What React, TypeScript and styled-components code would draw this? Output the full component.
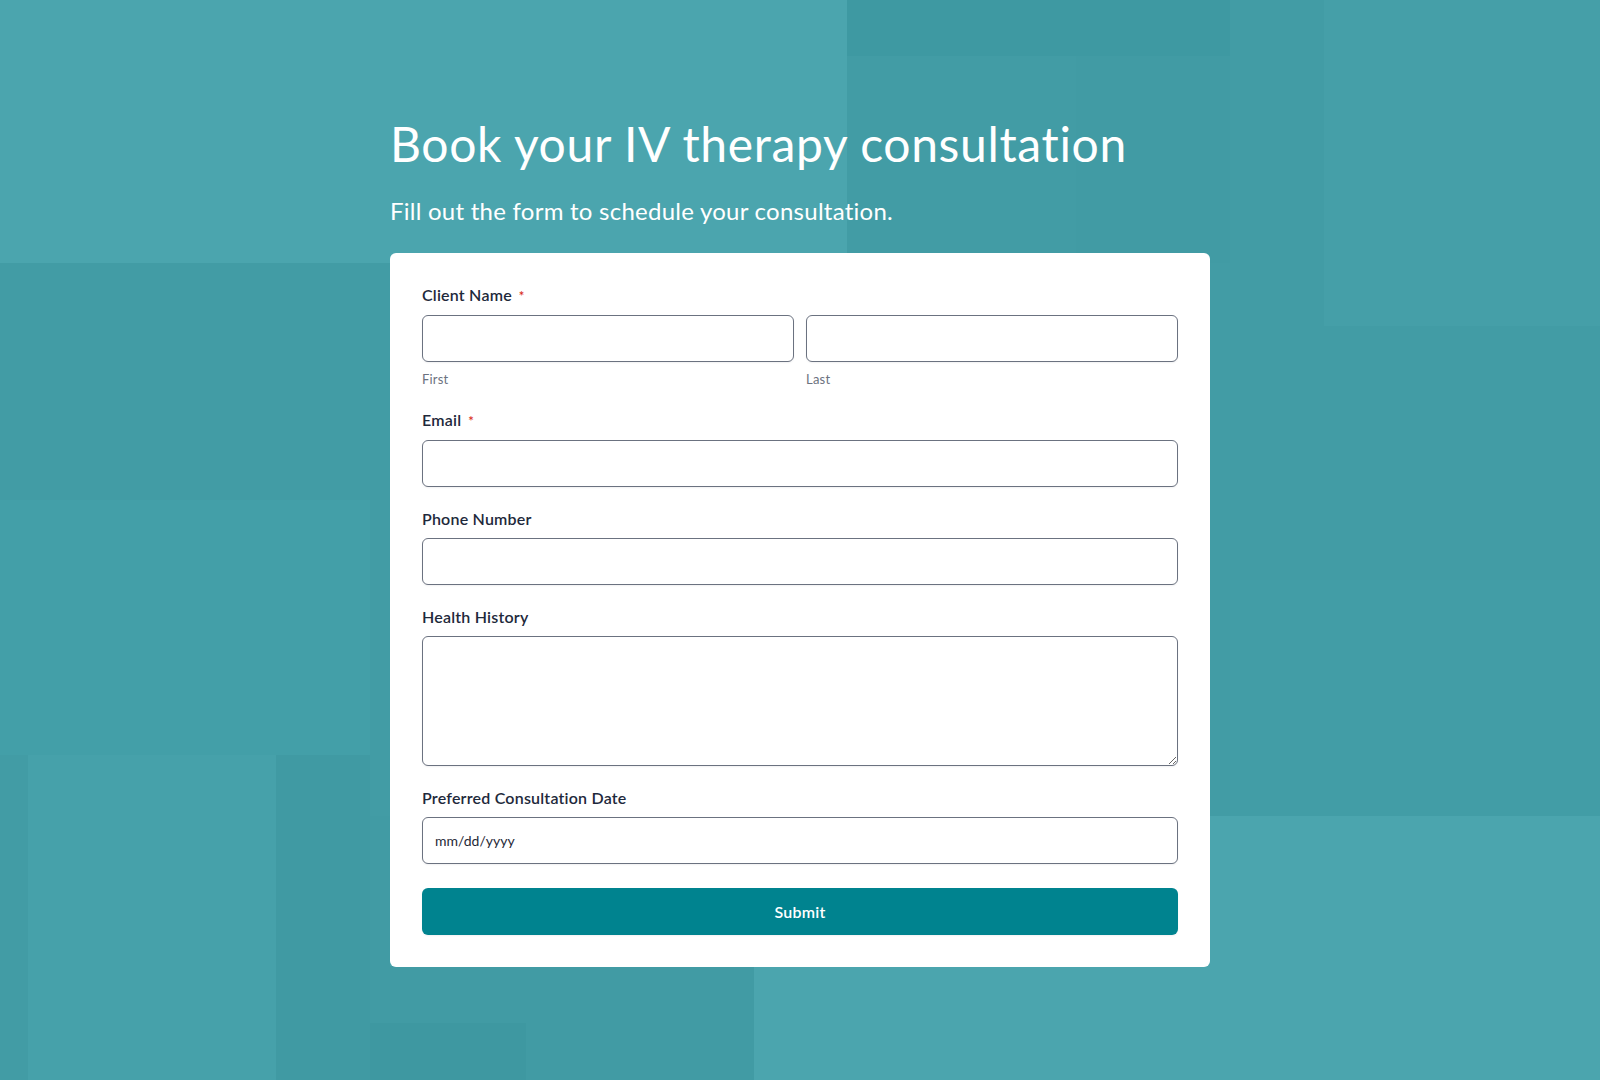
import styled, { createGlobalStyle } from 'styled-components'

const GlobalStyle = createGlobalStyle`
    * {
        box-sizing: border-box;
    }
    body {
        margin: 0;
        font-family: Lato, "Noto Sans", sans-serif;
        font-variant-ligatures: none;
        letter-spacing: 0.013em;
    }
`

// soft tiles painted on the page background: [colour, x, y, width, height]
const tiles: [string, number, number, number, number][] = [
    ['#3e98a1', 370, 1023, 156, 57],
    ['#419ba4', 370, 966, 384, 114],
    ['#409aa3', 276, 755, 94, 325],
    ['#46a1aa', 28, 755, 248, 325],
    ['#429ca5', 0, 755, 28, 325],
    ['#439fa8', 0, 500, 370, 255],
    ['#4ba5ae', 1211, 816, 389, 264],
    ['#429da6', 1230, 580, 370, 236],
    ['#3e99a2', 847, 0, 383, 56],
    ['#419ba4', 1076, 56, 154, 207],
    ['#459fa8', 1324, 0, 276, 326],
    ['#429ca5', 0, 263, 1600, 553],
    ['#429ca5', 847, 0, 753, 263],
    ['#419ba4', 0, 816, 390, 150],
]

const tileLayers = tiles
    .map(([c, x, y, w, h]) => `linear-gradient(${c}, ${c}) ${x}px ${y}px / ${w}px ${h}px no-repeat`)
    .join(', ')

const Page = styled.main`
    min-height: 100vh;
    padding: 115px 0 60px;
    background: ${tileLayers}, #4ba5ae;
`

const Wrap = styled.div`
    width: 820px;
    margin: 0 auto;
`

const Title = styled.h1`
    margin: 0 0 24px;
    font-size: 48px;
    font-weight: 400;
    line-height: 1.2;
    letter-spacing: 0.66px;
    color: #ffffff;
`

const Subtitle = styled.p`
    margin: 0 0 28px;
    font-size: 24px;
    font-weight: 400;
    line-height: 1.2;
    letter-spacing: 0.25px;
    color: #ffffff;
`

const Card = styled.form`
    background: #ffffff;
    border-radius: 6px;
    padding: 30px 32px 32px;
`

const Field = styled.div`
    margin-bottom: 20px;
`

const Label = styled.label`
    display: block;
    margin-bottom: 7px;
    font-size: 16px;
    font-weight: 600;
    line-height: 24px;
    color: #1e293b;
`

const Required = styled.span`
    margin-left: 7px;
    font-size: 13px;
    color: #d92d20;
`

const NameRow = styled.div`
    display: grid;
    grid-template-columns: 1fr 1fr;
    gap: 12px;
`

const SubLabel = styled.div`
    margin-top: 8px;
    font-size: 13px;
    line-height: 18px;
    color: #6b7280;
`

const Input = styled.input`
    display: block;
    width: 100%;
    height: 47px;
    padding: 0 12px;
    border: 1px solid #6b7280;
    border-radius: 6px;
    background: #ffffff;
    box-shadow: 0 1px 2px rgba(16, 24, 40, 0.06);
    font-family: Lato, "Noto Sans", sans-serif;
    font-size: 14px;
    letter-spacing: 0;
    color: #1f2937;

    &::-webkit-calendar-picker-indicator {
        display: none;
    }
    &::-webkit-datetime-edit-text,
    &::-webkit-datetime-edit-month-field,
    &::-webkit-datetime-edit-day-field,
    &::-webkit-datetime-edit-year-field {
        padding: 0;
    }
`

const TextArea = styled.textarea`
    display: block;
    width: 100%;
    height: 130px;
    padding: 10px 12px;
    border: 1px solid #6b7280;
    border-radius: 6px;
    box-shadow: 0 1px 2px rgba(16, 24, 40, 0.06);
    font-family: Lato, "Noto Sans", sans-serif;
    font-size: 14px;
    resize: vertical;
`

const SubmitButton = styled.button`
    display: block;
    width: 100%;
    height: 47px;
    margin-top: 24px;
    border: none;
    border-radius: 6px;
    background: #00838f;
    box-shadow: 0 1px 2px rgba(16, 24, 40, 0.06);
    font-family: Lato, "Noto Sans", sans-serif;
    font-size: 16px;
    font-weight: 600;
    letter-spacing: 0.013em;
    color: #ffffff;
    cursor: pointer;
`

const App = () => {
    return <>
        <GlobalStyle />
        <Page>
            <Wrap>
                <Title>Book your IV therapy consultation</Title>
                <Subtitle>Fill out the form to schedule your consultation.</Subtitle>
                <Card onSubmit={(e) => e.preventDefault()}>
                    <Field>
                        <Label htmlFor='first'>Client Name<Required>*</Required></Label>
                        <NameRow>
                            <div>
                                <Input type='text' id='first' name='first' />
                                <SubLabel>First</SubLabel>
                            </div>
                            <div>
                                <Input type='text' id='last' name='last' />
                                <SubLabel>Last</SubLabel>
                            </div>
                        </NameRow>
                    </Field>
                    <Field>
                        <Label htmlFor='email'>Email<Required>*</Required></Label>
                        <Input type='email' id='email' name='email' />
                    </Field>
                    <Field>
                        <Label htmlFor='phone'>Phone Number</Label>
                        <Input type='tel' id='phone' name='phone' />
                    </Field>
                    <Field>
                        <Label htmlFor='history'>Health History</Label>
                        <TextArea id='history' name='history' />
                    </Field>
                    <Field style={{ marginBottom: 0 }}>
                        <Label htmlFor='date'>Preferred Consultation Date</Label>
                        <Input type='date' id='date' name='date' />
                    </Field>
                    <SubmitButton type='submit'>Submit</SubmitButton>
                </Card>
            </Wrap>
        </Page>
    </>
}

export default App
